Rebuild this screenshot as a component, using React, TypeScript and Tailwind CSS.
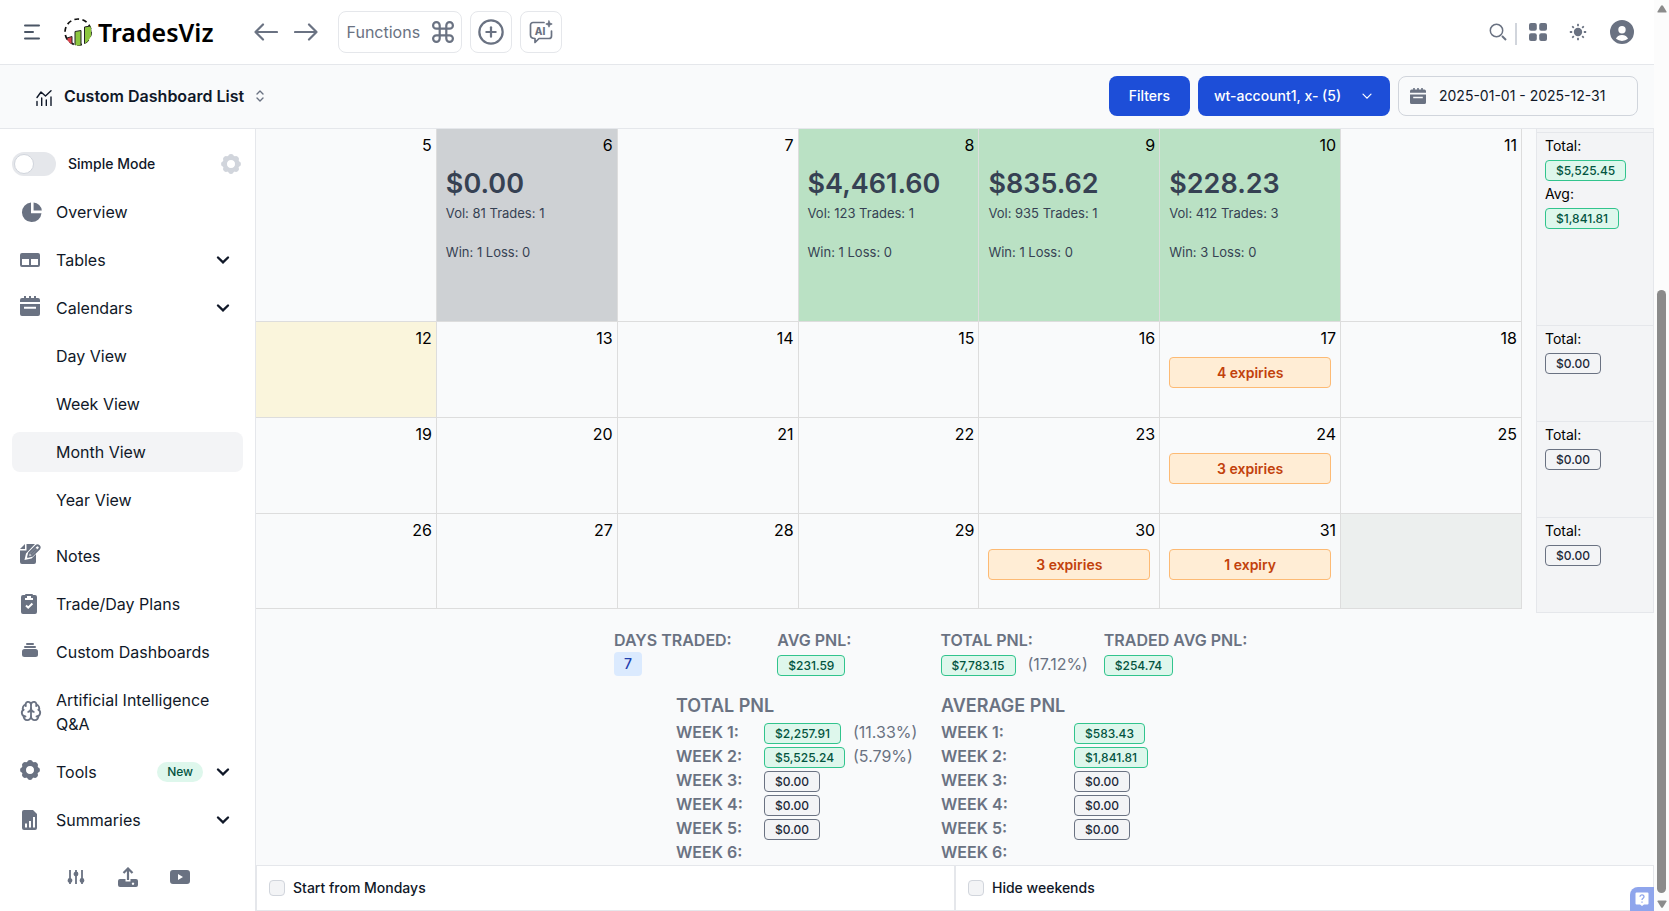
import React from "react";
import { Brain, CirclePlus } from "lucide-react";

type IconProps = { className?: string };

const OCTANTS = [0, 45, 90, 135, 180, 225, 270, 315];

function Gear({ className = "" }: IconProps) {
  return (
    <svg viewBox="2 2 20 20" className={className} fill="currentColor" aria-hidden="true">
      <circle cx="12" cy="12" r="6.2" fill="none" stroke="currentColor" strokeWidth="4.4" />
      {OCTANTS.map((a) => (
        <circle key={a} cx="12" cy="4.9" r="2.8" transform={`rotate(${a} 12 12)`} />
      ))}
    </svg>
  );
}

function Calendar({ className = "" }: IconProps) {
  return (
    <svg viewBox="0 0 20 20" className={className} fill="currentColor" aria-hidden="true">
      <path d="M4 0h2v2h3V0h2v2h3V0h2v2h2a2 2 0 0 1 2 2v2H0V4a2 2 0 0 1 2-2h2z" />
      <path fillRule="evenodd" d="M0 8h20v10a2 2 0 0 1-2 2H2a2 2 0 0 1-2-2zm4 2.8v2h12v-2z" />
    </svg>
  );
}

function Chevron({ className = "" }: IconProps) {
  return (
    <svg viewBox="0 0 24 24" className={className} fill="none" stroke="currentColor" strokeWidth="2.4" aria-hidden="true">
      <path d="M7 9.500l5 4.800 5-4.800" strokeLinecap="round" />
    </svg>
  );
}

function Svg({ children }: { children: React.ReactNode }) {
  return (
    <svg viewBox="0 0 24 24" className="size-6 shrink-0 text-gray-500" fill="currentColor" aria-hidden="true">
      {children}
    </svg>
  );
}

const icons = {
  pie: (
    <Svg>
      <path d="M11 2.500a9.800 9.800 0 1 0 10.500 10.700H11z" />
      <path d="M13.600 2.500v8h8.200a8.800 8.800 0 0 0-8.200-8z" />
    </Svg>
  ),
  table: (
    <Svg>
      <path fillRule="evenodd" d="M2 5h16a2 2 0 0 1 2 2v10a2 2 0 0 1-2 2H2a2 2 0 0 1-2-2V7a2 2 0 0 1 2-2zm0 6v6h7v-6zm9 0v6h7v-6z" />
    </Svg>
  ),
  calendar: (
    <span className="block size-6 shrink-0 text-gray-500">
      <Calendar className="size-5" />
    </span>
  ),
  notes: (
    <Svg>
      <path d="M5 0v5H0z" />
      <path d="M6.500 0H15l-9 9.500-1.500 6.500 7-1.500L16 10v8a2 2 0 0 1-2 2H2a2 2 0 0 1-2-2V6.500h6.500z" />
      <path d="M8 13l1-4 7-7a2 2 0 0 1 3 3l-7 7zM10.500 10.500l6-6" fill="none" stroke="currentColor" strokeWidth="1.800" strokeLinejoin="round" />
    </Svg>
  ),
  clipboard: (
    <Svg>
      <path fillRule="evenodd" d="M5 3a1 1 0 0 1 1-1h6a1 1 0 0 1 1 1h2a2 2 0 0 1 2 2v15a2 2 0 0 1-2 2H3a2 2 0 0 1-2-2V5a2 2 0 0 1 2-2zm2 1v2H5v2h8V6h-2V4z" />
      <path d="M6 13.500l2.200 2.200 4.200-4.200" fill="none" stroke="#fff" strokeWidth="2" />
    </Svg>
  ),
  stack: (
    <Svg>
      <rect x="6" y="3" width="8" height="2" rx="1" />
      <rect x="4" y="6" width="12" height="2" rx="1" />
      <rect x="2" y="9" width="16" height="8" rx="2.500" />
    </Svg>
  ),
  brain: (
    <span className="block size-6 shrink-0 text-gray-500">
      <Brain className="size-[22px]" strokeWidth={2} />
    </span>
  ),
  gear: (
    <span className="block size-6 shrink-0 text-gray-500">
      <Gear className="size-5" />
    </span>
  ),
  report: (
    <Svg>
      <path d="M4 2h9l4 4v14a2 2 0 0 1-2 2H4a2 2 0 0 1-2-2V4a2 2 0 0 1 2-2z" />
      <path d="M6 19.500v-4M10 19.500v-6.500M14 19.500V9" stroke="#fff" strokeWidth="2" />
    </Svg>
  ),
};

type NavItem = { label: string; icon?: React.ReactNode; expandable?: boolean; badge?: string; active?: boolean };

const nav: NavItem[][] = [
  [
    { label: "Overview", icon: icons.pie },
    { label: "Tables", icon: icons.table, expandable: true },
    { label: "Calendars", icon: icons.calendar, expandable: true },
    { label: "Day View" },
    { label: "Week View" },
    { label: "Month View", active: true },
    { label: "Year View" },
  ],
  [
    { label: "Notes", icon: icons.notes },
    { label: "Trade/Day Plans", icon: icons.clipboard },
    { label: "Custom Dashboards", icon: icons.stack },
    { label: "Artificial Intelligence Q&A", icon: icons.brain },
    { label: "Tools", icon: icons.gear, expandable: true, badge: "New" },
    { label: "Summaries", icon: icons.report, expandable: true },
  ],
];

function NavRow({ item }: { item: NavItem }) {
  const body = (
    <>
      {item.icon ?? <span className="size-6 shrink-0" />}
      <span className="flex-1 text-left">{item.label}</span>
      {item.badge && (
        <span className="rounded-full bg-[#def7ec] px-2.5 text-xs leading-5 font-medium text-[#03543f]">{item.badge}</span>
      )}
    </>
  );
  if (item.expandable) {
    return (
      <button className="flex w-full items-center gap-3 rounded-lg p-2">
        {body}
        <Chevron className="-ml-1 size-6 shrink-0" />
      </button>
    );
  }
  return (
    <a href="#" className={item.active ? "flex items-center gap-3 rounded-lg bg-gray-100 p-2" : "flex items-center gap-3 rounded-lg p-2"}>
      {body}
    </a>
  );
}

function Sidebar() {
  return (
    <aside className="flex w-64 shrink-0 flex-col border-r border-gray-200 bg-white px-3 pt-[19px] text-base text-gray-900">
      <div className="flex h-8 items-center">
        <label className="flex items-center gap-3 text-sm font-medium">
          <input type="checkbox" role="switch" className="peer sr-only" />
          <span className="flex h-6 w-11 items-center rounded-full bg-gray-200 p-0.5">
            <span className="size-5 rounded-full border border-gray-300 bg-white" />
          </span>
          Simple Mode
        </label>
        <button aria-label="Menu settings" className="mr-0.5 ml-auto text-gray-300">
          <Gear className="size-5" />
        </button>
      </div>
      <nav className="flex flex-col gap-4 pt-3">
        {nav.map((group, i) => (
          <ul key={i} className="flex flex-col gap-2">
            {group.map((item) => (
              <li key={item.label}>
                <NavRow item={item} />
              </li>
            ))}
          </ul>
        ))}
      </nav>
      <div className="flex justify-center gap-8 pt-[27px] text-gray-500">
        <button aria-label="Preferences">
          <svg viewBox="0 0 20 20" className="size-5" stroke="currentColor" strokeWidth="1.800" fill="currentColor">
            <path d="M4 3v14M10 3v14M16 3v14" />
            <circle cx="4" cy="13.500" r="1.500" />
            <circle cx="10" cy="7" r="1.500" />
            <circle cx="16" cy="13.500" r="1.500" />
          </svg>
        </button>
        <button aria-label="Upload">
          <svg viewBox="0 0 20 20" className="size-5" fill="currentColor">
            <path fillRule="evenodd" d="M2 12h5.500v2.500h5V12H18a2 2 0 0 1 2 2v4a2 2 0 0 1-2 2H2a2 2 0 0 1-2-2v-4a2 2 0 0 1 2-2zm13 3.500a1.200 1.200 0 1 0 .01 0z" />
            <path d="M10 13V2M5.500 6L10 1.500 14.500 6" fill="none" stroke="currentColor" strokeWidth="2.200" />
          </svg>
        </button>
        <button aria-label="Videos">
          <svg viewBox="0 0 20 20" className="size-5" fill="currentColor">
            <path fillRule="evenodd" d="M3 3h14a3 3 0 0 1 3 3v8a3 3 0 0 1-3 3H3a3 3 0 0 1-3-3V6a3 3 0 0 1 3-3zm5 4v6l5-3z" />
          </svg>
        </button>
      </div>
    </aside>
  );
}

function Logo() {
  return (
    <a href="#" className="flex items-center gap-1.5 text-black">
      <svg viewBox="0 0 28 28" className="size-7" aria-hidden="true">
        <clipPath id="logo-disc">
          <circle cx="14" cy="14" r="13.500" />
        </clipPath>
        <circle cx="14" cy="14" r="13" fill="none" stroke="#111" strokeWidth="1.700" strokeDasharray="4.800 3.370" />
        <g clipPath="url(#logo-disc)" stroke="#222" strokeWidth="1">
          <path d="M3 20l5-1.500V27H3z" fill="#d9414b" />
          <path d="M11 13.500l6-1v16h-6z" fill="#8cc63f" />
          <path d="M20.500 9l7-1.200v20h-7z" fill="#8cc63f" />
        </g>
      </svg>
      <span className="font-['Noto_Sans',sans-serif] text-[25px] leading-8 font-semibold">TradesViz</span>
    </a>
  );
}

function Header() {
  const box = "flex h-[42px] items-center justify-center rounded-lg border border-gray-200";
  return (
    <header className="flex h-[65px] shrink-0 items-center border-b border-gray-200 bg-white pr-5 pl-6 text-gray-500">
      <button aria-label="Toggle menu" className="mr-6 text-gray-600">
        <svg viewBox="0 0 16 16" className="size-4" stroke="currentColor" strokeWidth="2" strokeLinecap="round">
          <path d="M1 1.500h14M1 8h8M1 14.500h14" />
        </svg>
      </button>
      <Logo />
      <div className="ml-10 flex gap-4">
        <button aria-label="Back">
          <svg viewBox="0 0 24 24" className="size-6" fill="none" stroke="currentColor" strokeWidth="2.200" strokeLinecap="round" strokeLinejoin="round">
            <path d="M23 12H1.500M9 4.500L1.500 12 9 19.500" />
          </svg>
        </button>
        <button aria-label="Forward">
          <svg viewBox="0 0 24 24" className="size-6" fill="none" stroke="currentColor" strokeWidth="2.200" strokeLinecap="round" strokeLinejoin="round">
            <path d="M1 12h21.500M15 4.500l7.500 7.500-7.500 7.500" />
          </svg>
        </button>
      </div>
      <div className="ml-5 flex gap-2">
        <button className={box + " gap-3 pr-[7px] pl-2"}>
          Functions
          <svg viewBox="2 2 20 20" className="size-[22px]" fill="none" stroke="currentColor" strokeWidth="2" strokeLinecap="round" strokeLinejoin="round" aria-hidden="true">
            <path d="M15 6v12a3 3 0 1 0 3-3H6a3 3 0 1 0 3 3V6a3 3 0 1 0-3 3h12a3 3 0 1 0-3-3" />
          </svg>
        </button>
        <button aria-label="Add" className={box + " w-[42px]"}>
          <CirclePlus className="size-7" strokeWidth={1.9} />
        </button>
        <button aria-label="AI assistant" className={box + " w-[42px]"}>
          <svg viewBox="0 0 24 24" className="size-6" fill="none" stroke="currentColor" strokeWidth="1.700" strokeLinecap="round" strokeLinejoin="round">
            <path d="M15 2.500H4A2.500 2.500 0 0 0 1.500 5v10c0 2 1 3.500 4.500 3.500V22.500l4-4h10a2.500 2.500 0 0 0 2.500-2.500v-5" />
            <path d="M20 .8l.9 2.300 2.300.9-2.300.9L20 7.200l-.9-2.300-2.300-.9 2.300-.9z" fill="currentColor" strokeWidth=".8" />
            <text x="11" y="14.500" textAnchor="middle" fontSize="10" fontWeight="800" fill="currentColor" stroke="none">
              AI
            </text>
          </svg>
        </button>
      </div>
      <div className="ml-auto flex items-center">
        <button aria-label="Search">
          <svg viewBox="0 0 18 18" className="size-[18px]" fill="none" stroke="currentColor" strokeWidth="1.500">
            <circle cx="7.500" cy="7.500" r="6.200" />
            <path d="M13 13l4 4" strokeWidth="2" />
          </svg>
        </button>
        <span className="mt-1 ml-2 h-[22px] w-0.5 bg-gray-300" />
        <button aria-label="Apps" className="ml-3">
          <svg viewBox="0 0 18 18" className="size-[18px]" fill="currentColor">
            <rect width="7.800" height="7.800" rx="2" />
            <rect x="10.200" width="7.800" height="7.800" rx="2" />
            <rect y="10.200" width="7.800" height="7.800" rx="2" />
            <rect x="10.200" y="10.200" width="7.800" height="7.800" rx="2" />
          </svg>
        </button>
        <button aria-label="Theme" className="ml-[22px]">
          <svg viewBox="0 0 18 18" className="size-[18px]" fill="currentColor">
            <circle cx="9" cy="9" r="4.200" />
            {OCTANTS.map((a) => (
              <rect key={a} x="8.100" y=".8" width="1.800" height="2.400" rx=".5" transform={`rotate(${a} 9 9)`} />
            ))}
          </svg>
        </button>
        <button aria-label="Account" className="ml-[23px]">
          <svg viewBox="0 0 24 24" className="size-6" fill="currentColor">
            <path fillRule="evenodd" d="M12 0a12 12 0 1 0 0 24 12 12 0 0 0 0-24zm0 6a3.700 3.700 0 1 1 0 7.400A3.700 3.700 0 0 1 12 6zM6 18.800c.8-2.500 3-3.800 6-3.800s5.200 1.300 6 3.800a9.500 9.500 0 0 1-12 0z" />
          </svg>
        </button>
      </div>
    </header>
  );
}

function Toolbar() {
  return (
    <div className="flex h-16 shrink-0 items-center border-b border-gray-200 bg-gray-50 pr-4 pb-px pl-9">
      <button className="flex items-center gap-3 font-semibold text-gray-900">
        <svg viewBox="0 0 16 16" className="mt-1 size-4" fill="none" stroke="currentColor" strokeWidth="1.400" strokeLinecap="round" strokeLinejoin="round">
          <path d="M1 7.500L5 2l4.500 4L15 .8M1 11.500v4M5.700 8v7.500M10.300 10v5.500M15 7v8.500" />
        </svg>
        Custom Dashboard List
        <svg viewBox="0 0 8 12" className="h-3 w-2 text-gray-500" fill="none" stroke="currentColor" strokeWidth="1.400" strokeLinecap="round" strokeLinejoin="round">
          <path d="M1 4l3-3 3 3M1 8l3 3 3-3" />
        </svg>
      </button>
      <div className="ml-auto flex gap-2 text-sm">
        <button className="h-10 rounded-lg bg-[#1d4ed8] px-5 font-medium text-white">Filters</button>
        <button className="flex h-10 w-48 items-center justify-between rounded-lg bg-[#1d4ed8] px-4 font-medium text-white">
          wt-account1, x- (5)
          <svg viewBox="0 0 14 14" className="size-3.5" fill="none" stroke="currentColor" strokeWidth="1.200" strokeLinecap="round">
            <path d="M3 5.200L7 9.200l4-4" />
          </svg>
        </button>
        <label className="flex h-10 w-60 items-center gap-[13px] rounded-lg border border-gray-300 bg-gray-50 px-[11px] text-gray-900">
          <Calendar className="size-4 shrink-0 text-gray-500" />
          <input aria-label="Date range" defaultValue="2025-01-01 - 2025-12-31" className="w-full min-w-0 bg-transparent outline-none" />
        </label>
      </div>
    </div>
  );
}

type Day = { day?: number; pnl?: string; vol?: string; wins?: string; tone?: string; expiry?: string };

const weeks: Day[][] = [
  [
    { day: 5 },
    { day: 6, pnl: "$0.00", vol: "Vol: 81 Trades: 1", wins: "Win: 1 Loss: 0", tone: "bg-[#ced1d4]" },
    { day: 7 },
    { day: 8, pnl: "$4,461.60", vol: "Vol: 123 Trades: 1", wins: "Win: 1 Loss: 0", tone: "bg-[#bae1c4]" },
    { day: 9, pnl: "$835.62", vol: "Vol: 935 Trades: 1", wins: "Win: 1 Loss: 0", tone: "bg-[#bae1c4]" },
    { day: 10, pnl: "$228.23", vol: "Vol: 412 Trades: 3", wins: "Win: 3 Loss: 0", tone: "bg-[#bae1c4]" },
    { day: 11 },
  ],
  [{ day: 12, tone: "bg-[#faf5dc]" }, { day: 13 }, { day: 14 }, { day: 15 }, { day: 16 }, { day: 17, expiry: "4 expiries" }, { day: 18 }],
  [{ day: 19 }, { day: 20 }, { day: 21 }, { day: 22 }, { day: 23 }, { day: 24, expiry: "3 expiries" }, { day: 25 }],
  [{ day: 26 }, { day: 27 }, { day: 28 }, { day: 29 }, { day: 30, expiry: "3 expiries" }, { day: 31, expiry: "1 expiry" }, { tone: "bg-[#ecefee]" }],
];

const weekHeights = ["h-[193px]", "h-24", "h-24", "h-[95px]"];

function DayCell({ d }: { d: Day }) {
  return (
    <td className={"border-r border-b border-[#dddddd] p-0 align-top " + (d.tone ?? "")}>
      <div className="pt-1 pr-1 text-right leading-6 text-black">{d.day}</div>
      {d.pnl && (
        <div className="px-[9px] pt-[9px] text-[13px] leading-5 text-gray-700">
          <div className="text-[27px] leading-9 font-semibold">{d.pnl}</div>
          <div className="pt-px">{d.vol}</div>
          <div className="pt-[19px]">{d.wins}</div>
        </div>
      )}
      {d.expiry && (
        <div className="px-[9px] pt-[7px]">
          <button className="block w-full rounded-sm border border-[#fdba74] bg-[#ffedd5] py-1 text-sm leading-[21px] font-semibold text-[#c2410c]">
            {d.expiry}
          </button>
        </div>
      )}
    </td>
  );
}

function MonthGrid() {
  return (
    <table className="w-full table-fixed border-separate border-spacing-0">
      <tbody>
        {weeks.map((week, i) => (
          <tr key={i} className={weekHeights[i]}>
            {week.map((d, j) => (
              <DayCell key={j} d={d} />
            ))}
          </tr>
        ))}
      </tbody>
    </table>
  );
}

function Amount({ value }: { value: string }) {
  const zero = value === "$0.00";
  return (
    <span
      className={
        "block rounded border px-2.5 text-xs leading-[19px] font-medium " +
        (zero ? "border-gray-500 bg-gray-100 text-gray-800" : "border-[#31c48d] bg-[#def7ec] text-[#03543f]")
      }
    >
      {value}
    </span>
  );
}

const weekTotals = [{ total: "$5,525.45", avg: "$1,841.81" }, { total: "$0.00" }, { total: "$0.00" }, { total: "$0.00" }];

function WeekTotals() {
  return (
    <div className="w-[118px] shrink-0 border-x border-b border-gray-200 bg-gray-100 pt-[3px] text-sm leading-6 text-black">
      {weekTotals.map((w, i) => (
        <div key={i} className={"border-t border-gray-200 px-2 pt-px " + weekHeights[i]}>
          <div>Total:</div>
          <div className="flex h-6 items-center">
            <Amount value={w.total} />
          </div>
          {w.avg && (
            <>
              <div>Avg:</div>
              <div className="flex h-6 items-center">
                <Amount value={w.avg} />
              </div>
            </>
          )}
        </div>
      ))}
    </div>
  );
}

const summary = [
  { label: "AVG PNL:", value: "$231.59" },
  { label: "TOTAL PNL:", value: "$7,783.15", pct: "(17.12%)" },
  { label: "TRADED AVG PNL:", value: "$254.74" },
];

const totals = [["$2,257.91", "(11.33%)"], ["$5,525.24", "(5.79%)"], ["$0.00"], ["$0.00"], ["$0.00"], []];
const averages = [["$583.43"], ["$1,841.81"], ["$0.00"], ["$0.00"], ["$0.00"], []];

function WeekTable({ title, rows, labelWidth }: { title: string; rows: string[][]; labelWidth: string }) {
  return (
    <table className="border-separate border-spacing-0 text-left leading-6">
      <caption className="pb-0.5 text-left text-lg leading-6 font-semibold">{title}</caption>
      <tbody>
        {rows.map(([value, pct], i) => (
          <tr key={i} className="h-6">
            <th scope="row" className={"p-0 font-semibold " + labelWidth}>{`WEEK ${i + 1}:`}</th>
            <td className="w-[89px] p-0">
              <div className="flex h-6 items-center pt-0.5">{value && <Amount value={value} />}</div>
            </td>
            <td className="p-0">{pct}</td>
          </tr>
        ))}
      </tbody>
    </table>
  );
}

function Stats() {
  return (
    <section className="-mt-px pt-4 pl-[358px] text-base text-gray-500">
      <div className="grid w-[653px] grid-cols-4 leading-6">
        <div>
          <div className="font-semibold">DAYS TRADED:</div>
          <span className="block w-fit rounded bg-[#dbeafe] px-2.5 text-sm leading-6 font-medium text-[#1e40af]">7</span>
        </div>
        {summary.map((s) => (
          <div key={s.label} className="whitespace-nowrap">
            <div className="font-semibold">{s.label}</div>
            <div className="flex h-6 items-center gap-3">
              <span className="pt-0.5">
                <Amount value={s.value} />
              </span>
              {s.pct}
            </div>
          </div>
        ))}
      </div>
      <div className="flex pt-[18px] pl-[62px]">
        <div className="w-[265px]">
          <WeekTable title="TOTAL PNL" rows={totals} labelWidth="w-[88px]" />
        </div>
        <WeekTable title="AVERAGE PNL" rows={averages} labelWidth="w-[133px]" />
      </div>
    </section>
  );
}

function Options() {
  return (
    <div className="mt-auto flex shrink-0 border border-gray-200 bg-white text-sm font-medium text-gray-900">
      {["Start from Mondays", "Hide weekends"].map((label, i) => (
        <label key={label} className={"flex h-11 flex-1 items-center gap-2 px-3 " + (i ? "border-l-2 border-gray-200" : "")}>
          <input type="checkbox" className="size-4 appearance-none rounded border border-gray-300 bg-gray-100" />
          {label}
        </label>
      ))}
    </div>
  );
}

function ScrollTrack() {
  return (
    <div className="flex w-[15px] shrink-0 flex-col items-center bg-[#fcfcfc] text-[#8b8b8b]" aria-hidden="true">
      <svg viewBox="0 0 10 8" className="mt-[5px] h-2 w-2.5" fill="currentColor">
        <path d="M4 .8q1-1.300 2 0L9.500 6.500q.3 1-.8 1H1.300q-1.100 0-.8-1z" />
      </svg>
      <div className="flex w-full flex-1 flex-col items-center pt-[277px] pb-[7px]">
        <div className="w-[9px] flex-1 rounded-full bg-[#8b8b8b]" />
      </div>
      <svg viewBox="0 0 10 8" className="mb-[3px] h-2 w-2.5" fill="currentColor">
        <path d="M4 7.200q1 1.300 2 0L9.500 1.500q.3-1-.8-1H1.300q-1.100 0-.8 1z" />
      </svg>
    </div>
  );
}

export default function App() {
  return (
    <div className="flex h-screen overflow-hidden bg-gray-50 font-[Inter,sans-serif] text-base">
      <div className="relative flex min-w-0 flex-1 flex-col">
        <Header />
        <Toolbar />
        <div className="flex min-h-0 flex-1">
          <Sidebar />
          <main className="flex min-w-0 flex-1 flex-col">
            <div className="flex items-start gap-3.5">
              <div className="min-w-0 flex-1">
                <MonthGrid />
              </div>
              <WeekTotals />
            </div>
            <Stats />
            <Options />
          </main>
        </div>
        <button aria-label="Help" className="absolute right-0 bottom-0 flex size-6 items-center justify-center rounded-tl-lg bg-[#8fa5ec]">
          <svg viewBox="0 0 14 14" className="size-3.5" fill="none" aria-hidden="true">
            <path d="M1.500.5h11a1 1 0 0 1 1 1v10a1 1 0 0 1-1 1H9L7 14l-2-1.500H1.500a1 1 0 0 1-1-1v-10a1 1 0 0 1 1-1z" fill="#fff" />
            <path d="M5 4.800C5 2.300 9 2.300 9 4.800 9 6.300 7 6.300 7 8M7 9.500v1.200" stroke="#8fa5ec" strokeWidth="1.300" />
          </svg>
        </button>
      </div>
      <ScrollTrack />
    </div>
  );
}
